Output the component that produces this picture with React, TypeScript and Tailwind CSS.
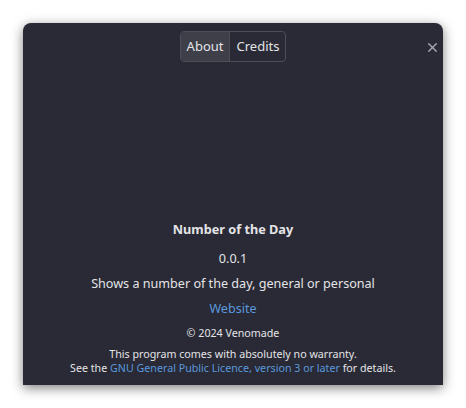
import { X } from "lucide-react";

function App() {
  return (
    <div className="w-[466px] h-[408px] bg-white pt-[23px] pl-[23px] font-['Noto_Sans',sans-serif]">
      <div className="w-[420px] h-[362px] bg-[#292a35] rounded-t-[8px] shadow-[0_3px_12px_rgba(0,0,0,0.5)] flex flex-col text-[#e4e4e7]">
        <div className="relative flex justify-center pt-[8px]">
          <div className="flex h-[31px] border border-[#4b4d57] rounded-[4px] overflow-hidden text-[13px]">
            <div className="px-[6px] flex items-center bg-[#3e3f49] border-r border-[#4b4d57]">About</div>
            <div className="px-[6px] flex items-center">Credits</div>
          </div>
          <X className="absolute right-[3px] top-[17px] w-[15px] h-[15px] text-[#a6a7ae]" strokeWidth={2.2} />
        </div>
        <div className="flex-1 flex flex-col items-center justify-end pb-[10px] text-center">
          <div className="text-[12.7px] font-bold leading-[20px]">Number of the Day</div>
          <div className="text-[12.6px] leading-[20px] mt-[10px]">0.0.1</div>
          <div className="text-[12.6px] leading-[20px] mt-[5px]">Shows a number of the day, general or personal</div>
          <div className="text-[12.6px] leading-[20px] mt-[5px] text-[#5a98dc]">Website</div>
          <div className="text-[10.7px] leading-[16px] mt-[6px]">© 2024 Venomade</div>
          <div className="text-[10.7px] leading-[14px] mt-[6px]">This program comes with absolutely no warranty.</div>
          <div className="text-[10.7px] leading-[14px]">
            See the <span className="text-[#5a98dc]">GNU General Public Licence, version 3 or later</span> for details.
          </div>
        </div>
      </div>
    </div>
  );
}

export default App;
